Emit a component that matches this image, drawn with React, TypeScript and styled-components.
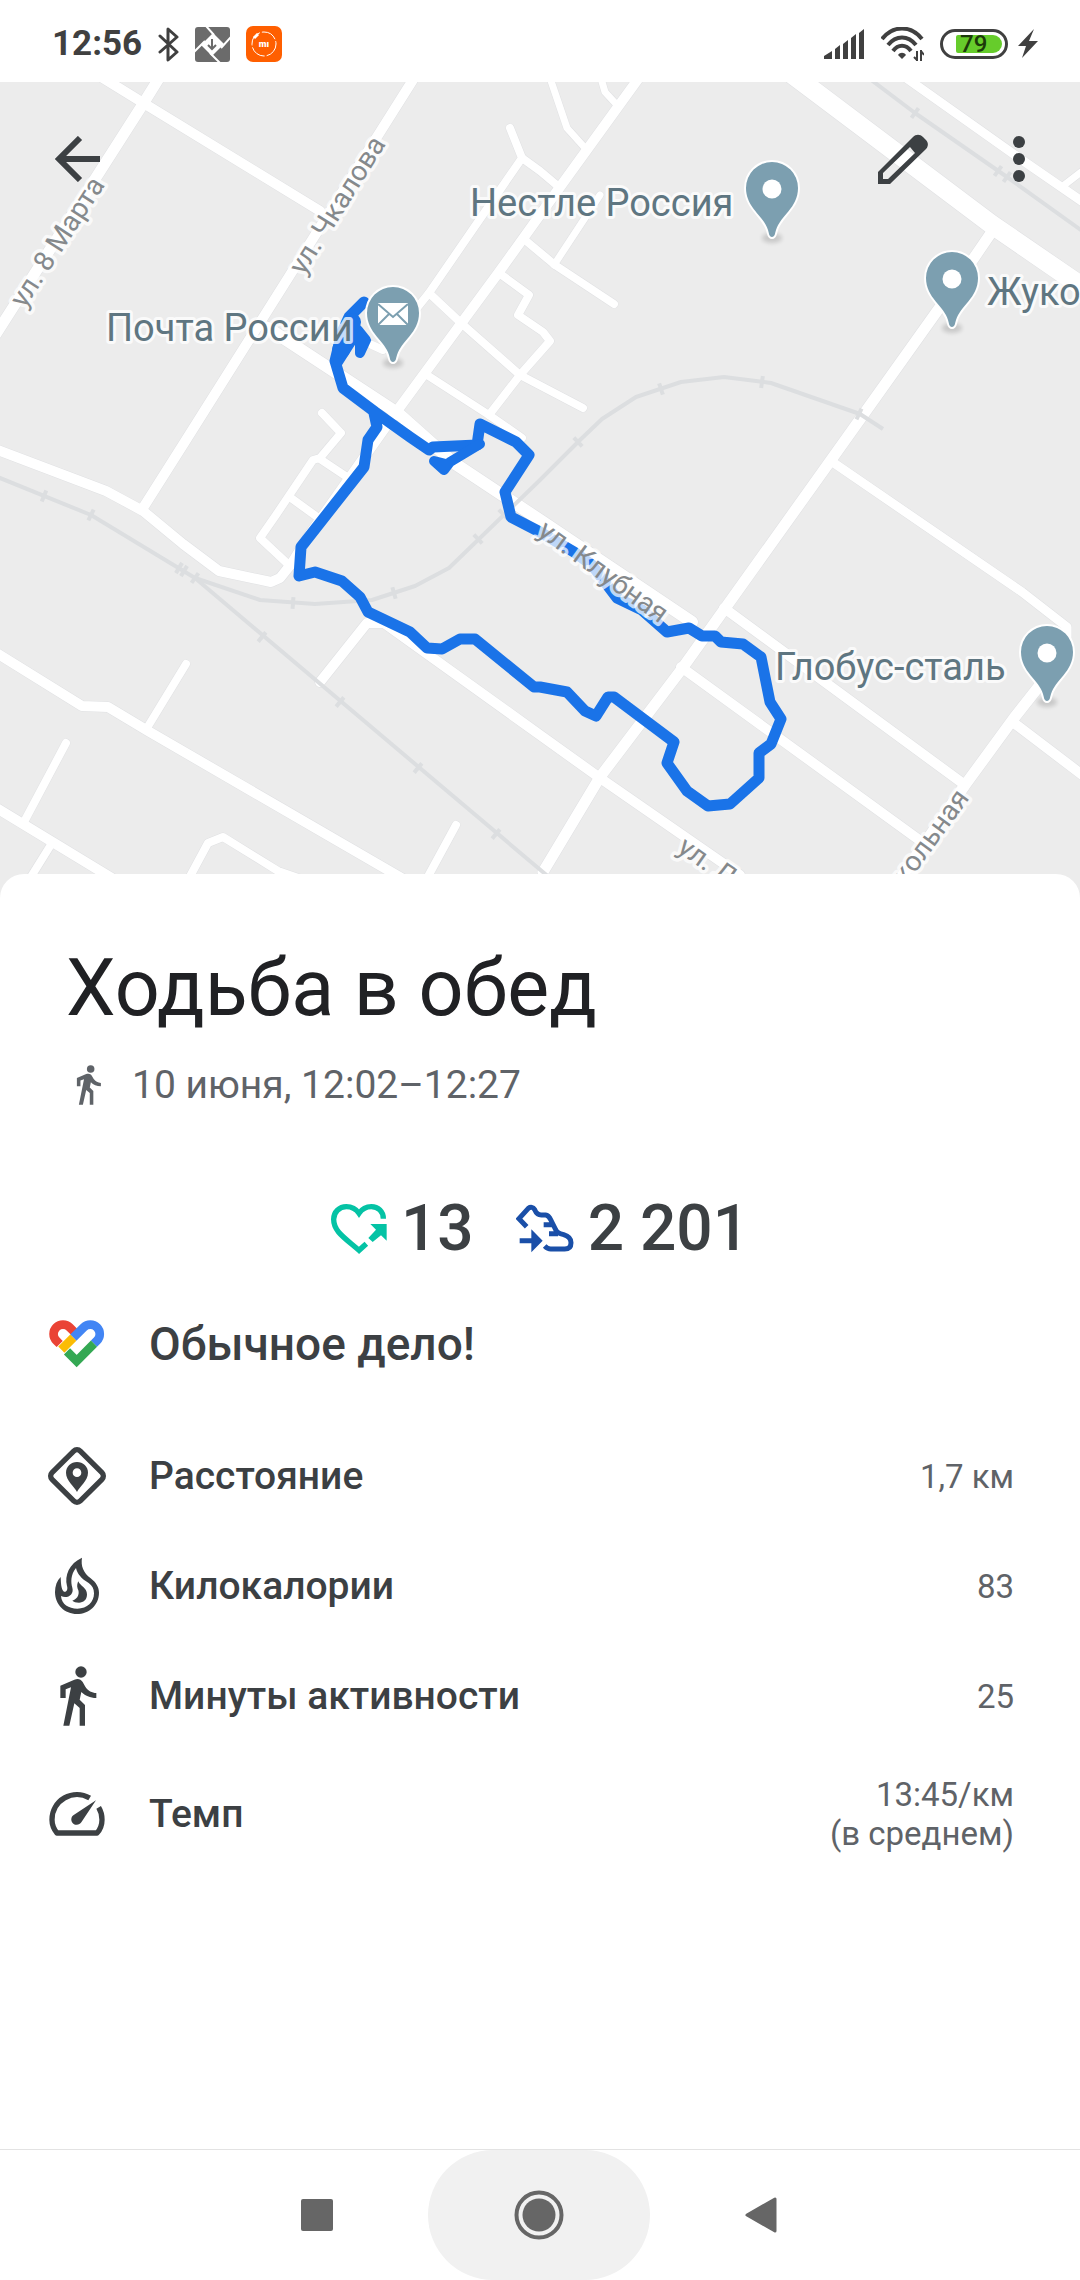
import React from "react";
import styled, { createGlobalStyle } from "styled-components";

const INK = "#3c4043";
const MUTED = "#5f6368";

const GlobalStyle = createGlobalStyle`
  * { box-sizing: border-box; }
  html, body { margin: 0; padding: 0; background: #ffffff; }
  body { font-family: Roboto, "Noto Sans", sans-serif; color: ${INK}; }
`;

const Screen = styled.div`
  display: flex;
  flex-direction: column;
  min-height: 100vh;
  background: #ffffff;
`;

const StatusBar = styled.header`
  display: flex;
  align-items: center;
  justify-content: space-between;
  padding: 20px 42px 14px 52px;
  height: 82px;
`;

const StatusGroup = styled.div<{ $gap: number }>`
  display: flex;
  align-items: center;
  gap: ${(p) => p.$gap}px;
`;

const Clock = styled.time`
  font-size: 35px;
  line-height: 48px;
  font-weight: 700;
  color: #404040;
`;

const BatteryPill = styled.div`
  display: flex;
  align-items: center;
  justify-content: flex-end;
  width: 68px;
  height: 30px;
  padding: 0 3px;
  border: 3px solid #404040;
  border-radius: 15px;
`;

const BatteryLevel = styled.div`
  display: flex;
  align-items: center;
  padding-left: 4px;
  width: 46px;
  height: 18px;
  border-radius: 2px 9px 9px 2px;
  background: #66cc2b;
  color: #1c3a0a;
  font-size: 24px;
  line-height: 18px;
  font-weight: 500;
`;

const MapArea = styled.section`
  position: relative;
  background: #ececec;
`;

const MapCanvas = styled.svg`
  display: block;
  width: 100%;
  height: auto;
`;

const Toolbar = styled.nav`
  position: absolute;
  inset: 0 0 auto 0;
  display: flex;
  align-items: center;
  padding: 29px 13px 0 29px;
`;

const Spacer = styled.div`
  flex: 1;
`;

const ToolButton = styled.button<{ $end?: boolean }>`
  display: flex;
  align-items: center;
  justify-content: center;
  width: 96px;
  height: 96px;
  margin-right: ${(p) => (p.$end ? 20 : 0)}px;
  padding: 0;
  border: 0;
  background: none;
  color: ${INK};
`;

const Sheet = styled.main`
  position: relative;
  flex: 1;
  display: flex;
  flex-direction: column;
  margin-top: -28px;
  padding-top: 66px;
  border-radius: 24px 24px 0 0;
  background: #ffffff;
`;

const Title = styled.h1`
  margin: 0;
  padding: 0 66px;
  font-size: 79px;
  line-height: 96px;
  font-weight: 400;
  color: #202124;
`;

const When = styled.p`
  display: flex;
  align-items: center;
  gap: 24px;
  margin: 0;
  padding: 25px 68px 0;
  font-size: 39px;
  line-height: 48px;
  color: ${MUTED};
`;

const Scores = styled.div`
  display: flex;
  justify-content: center;
  align-items: center;
  gap: 42px;
  padding-top: 80px;
`;

const Score = styled.div`
  display: flex;
  align-items: center;
  gap: 14px;
  font-size: 64px;
  line-height: 80px;
  font-weight: 500;
  color: ${INK};
`;

const Praise = styled.h2`
  display: flex;
  align-items: center;
  gap: 42px;
  margin: 0;
  padding: 36px 66px 0 47px;
  font-size: 46px;
  line-height: 78px;
  font-weight: 500;
`;

const Metrics = styled.dl`
  display: flex;
  flex-direction: column;
  margin: 0;
  padding: 38px 66px 0 47px;
`;

const MetricRow = styled.div<{ $tall?: boolean }>`
  display: flex;
  align-items: center;
  justify-content: space-between;
  min-height: ${(p) => (p.$tall ? 126 : 110)}px;
`;

const MetricName = styled.dt`
  display: flex;
  align-items: center;
  gap: 42px;
  font-size: 39px;
  line-height: 48px;
  font-weight: 500;
`;

const MetricValue = styled.dd`
  margin: 0;
  font-size: 33px;
  line-height: 39px;
  text-align: right;
  white-space: pre-line;
  color: ${MUTED};
`;

const NavBar = styled.footer`
  display: flex;
  justify-content: center;
  height: 131px;
  padding-right: 3px;
  border-top: 1px solid #e3e3e3;
`;

const NavButton = styled.button<{ $pressed?: boolean }>`
  display: flex;
  align-items: center;
  justify-content: center;
  width: 222px;
  padding: 0;
  border: 0;
  border-radius: 65px;
  background: ${(p) => (p.$pressed ? "#f1f1f1" : "transparent")};
  color: #666666;
`;

/* ---------- map data ---------- */

const ROADS: { w: number; d: string }[] = [
  { w: 10, d: "M98 75L145 104L320 211" },
  { w: 11, d: "M161 75L143 104L-4 334" },
  { w: 10, d: "M416 75L186 440L143 508" },
  { w: 10, d: "M-5 449L106 491L143 511L183 544L219 571L271 582L280 578L292 563L310 534L394 415L427 370L460 325L499 272L560 187L641 75" },
  { w: 12, d: "M268 328L399 414L454 463L540 520L692 622" },
  { w: 8, d: "M510 128L522 158L429 293L383 350L372 345" },
  { w: 8, d: "M522 158L540 171L559 187" },
  { w: 8, d: "M429 293L461 323L520 375L583 408" },
  { w: 8, d: "M427 375L489 415L522 438" },
  { w: 8, d: "M499 273L529 295L518 315L543 332L550 341L520 375L489 415" },
  { w: 8, d: "M525 240L555 265L614 304" },
  { w: 7, d: "M554 265L600 195" },
  { w: 7, d: "M549 75L567 128L585 148" },
  { w: 7, d: "M600 75L605 92L617 105" },
  { w: 19, d: "M793 75L991 224L1090 292" },
  { w: 9, d: "M902 75L1022 160L1090 207" },
  { w: 7, d: "M1063 186L1085 169" },
  { w: 11, d: "M991 233L950 293L831 460L726 607L681 670L600 777L543 872" },
  { w: 9, d: "M831 461L1022 592L1067 627L1067 640L1036 690" },
  { w: 11, d: "M1040 685L1014 718L965 785L898 882" },
  { w: 10, d: "M724 608L965 785" },
  { w: 10, d: "M681 667L922 842" },
  { w: 10, d: "M1014 723L1085 777" },
  { w: 10, d: "M320 682L367 623L384 623L540 735L600 778L740 875" },
  { w: 8, d: "M322 413L341 433L320 458L313 460L276 515L260 538L290 566" },
  { w: 8, d: "M320 459L350 479" },
  { w: 8, d: "M291 498L320 519" },
  { w: 10, d: "M-5 652L82 706L108 707L148 731L405 880" },
  { w: 8, d: "M186 664L147 728" },
  { w: 8, d: "M66 743L24 822" },
  { w: 10, d: "M-5 807L115 880" },
  { w: 8, d: "M52 843L29 880" },
  { w: 8, d: "M187 882L208 843L223 837L278 871L310 882" },
  { w: 8, d: "M456 825L425 882" },
];

const RAILS = [
  "M866 76L915 113L1007 177L1085 233",
  "M-5 476L91 515L195 578L550 878",
  "M195 578L260 600L315 604L372 600L415 586L449 568L540 480L580 440L602 419L636 397L681 382L724 377L771 383L860 414L883 429",
];

const SLEEPERS: [number, number, number][] = [
  [915, 113, 36], [998, 171, 36], [1007, 177, 36], [661, 389, -18], [762, 382, 8], [859, 414, 25],
  [44, 496, 22], [91, 515, 26], [179, 568, 31], [184, 571, 31], [195, 578, 35], [293, 603, 4],
  [394, 593, -16], [478, 539, -44], [503, 514, -44], [578, 442, -44], [262, 637, 40], [340, 702, 40],
  [418, 768, 40], [496, 834, 40],
];

const ROUTE =
  "M364 302L349 317L342 332L335 361L343 388L375 412L410 437L429 450L433 447L477 445L480 424L516 442L529 455L505 492L511 517L540 532L574 552L592 565L617 598L642 610L667 632L689 628L702 636L715 636L721 642L743 644L761 657L770 702L781 719L771 744L759 753L759 778L730 804L708 806L687 791L667 763L674 742L614 697L608 697L596 716L585 711L567 692L540 687L534 687L475 639L460 639L442 649L427 648L410 632L368 612L360 597L342 581L315 572L299 576L301 547L364 467L368 440L377 427L374 413";

const PINS: { x: number; y: number; mail?: boolean }[] = [
  { x: 393, y: 314, mail: true },
  { x: 772, y: 189 },
  { x: 952, y: 279 },
  { x: 1047, y: 653 },
];

const PLACES = [
  { x: 106, y: 341, name: "Почта России" },
  { x: 470, y: 216, name: "Нестле Россия" },
  { x: 987, y: 305, name: "Жуко" },
  { x: 775, y: 680, name: "Глобус-сталь" },
];

const STREETS: { x: number; y: number; turn: number; name: string; anchor: "start" | "middle" | "end" }[] = [
  { x: 65, y: 247, turn: -57, name: "ул. 8 Марта", anchor: "middle" },
  { x: 345, y: 210, turn: -58, name: "ул. Чкалова", anchor: "middle" },
  { x: 598, y: 579, turn: 36, name: "ул. Клубная", anchor: "middle" },
  { x: 676, y: 851, turn: 35, name: "ул. Ле", anchor: "start" },
  { x: 970, y: 798, turn: -54, name: "кольная", anchor: "end" },
];

const PlaceLabel = styled.text`
  font-family: Roboto, "Noto Sans", sans-serif;
  font-size: 38px;
  fill: #5f7681;
  stroke: rgba(255, 255, 255, 0.75);
  stroke-width: 6px;
  stroke-linejoin: round;
  paint-order: stroke;
`;

const StreetLabel = styled.text`
  font-family: Roboto, "Noto Sans", sans-serif;
  font-size: 28px;
  fill: #85898c;
  stroke: rgba(255, 255, 255, 0.72);
  stroke-width: 7px;
  stroke-linejoin: round;
  paint-order: stroke;
`;

function RouteMap() {
  return (
    <MapCanvas viewBox="0 82 1080 820" role="img" aria-label="Маршрут">
      <defs>
        <filter id="soft" x="-50%" y="-50%" width="200%" height="200%">
          <feGaussianBlur stdDeviation="2" />
        </filter>
      </defs>
      <rect x="0" y="82" width="1080" height="820" fill="#ececec" />
      <g fill="none" strokeLinecap="round" strokeLinejoin="round">
        {ROADS.map((r) => (
          <path key={r.d} d={r.d} stroke="#e0e1e3" strokeWidth={r.w + 1} />
        ))}
        {ROADS.map((r) => (
          <path key={r.d} d={r.d} stroke="#ffffff" strokeWidth={r.w} />
        ))}
      </g>
      <g fill="none" stroke="#dcdee0" strokeWidth="4" strokeLinejoin="round">
        {RAILS.map((d) => (
          <path key={d} d={d} />
        ))}
        {SLEEPERS.map(([x, y, a]) => (
          <path key={`${x}-${y}`} d="M0 -6V6" strokeWidth="4" transform={`translate(${x} ${y}) rotate(${a})`} />
        ))}
      </g>
      <g fill="none" stroke="#1a73e8" strokeLinejoin="round" strokeLinecap="round">
        <path d={ROUTE} strokeWidth="11" />
        <path d="M358 330L366 340L360 353V341L354 337L338 362" strokeWidth="10" />
        <path d="M352 322L341 350" strokeWidth="18" />
        <path d="M480 444L470 450L450 462L444 470L434 461L446 464" strokeWidth="10" />
      </g>
      {STREETS.map((s) => (
        <StreetLabel key={s.name} textAnchor={s.anchor} transform={`translate(${s.x} ${s.y}) rotate(${s.turn})`}>
          {s.name}
        </StreetLabel>
      ))}
      {PLACES.map((p) => (
        <PlaceLabel key={p.name} x={p.x} y={p.y}>
          {p.name}
        </PlaceLabel>
      ))}
      {PINS.map((p) => (
        <g key={p.x} transform={`translate(${p.x} ${p.y})`}>
          <ellipse cx="0" cy="49" rx="10" ry="5" fill="#000000" opacity="0.15" filter="url(#soft)" />
          <path
            d="M0 48C-3 48 -3 44 -4 41C-8 27 -26 19 -26 -1A26 26 0 0 1 26 -1C26 19 8 27 4 41C3 44 3 48 0 48Z"
            fill="#7c9fb0"
            stroke="#ffffff"
            strokeWidth="4"
            paintOrder="stroke"
          />
          {p.mail ? (
            <>
              <rect x="-15" y="-11" width="30" height="22" fill="#ffffff" />
              <path d="M-15 -10L0 3L15 -10M-15 11L-4 0M15 11L4 0" fill="none" stroke="#7c9fb0" strokeWidth="2" />
            </>
          ) : (
            <circle r="9.5" fill="#ffffff" />
          )}
        </g>
      ))}
    </MapCanvas>
  );
}

/* ---------- icons ---------- */

const BluetoothIcon = () => (
  <svg width="21" height="35" viewBox="0 0 21 35" fill="none" stroke="#404040" strokeWidth="3" strokeLinejoin="round" strokeLinecap="round">
    <path d="M2 9L19 25L10 33V2L19 10L2 25" />
  </svg>
);

const ShutterIcon = () => (
  <svg width="35" height="35" viewBox="0 0 35 35">
    <rect width="35" height="35" rx="3" fill="#6b6b6b" />
    <path d="M18 6L29 17L17 29L6 18Z" fill="#ffffff" />
    <path d="M11 -1L19 8M36 10L26 21M25 36L15 26M-1 25L10 14" stroke="#ffffff" strokeWidth="2" />
    <path d="M17 12V22M13 18L17 22L21 18" fill="none" stroke="#6b6b6b" strokeWidth="2" />
  </svg>
);

const MiIcon = () => (
  <svg width="36" height="36" viewBox="0 0 36 36">
    <rect width="36" height="36" rx="7" fill="#ff5f00" />
    <circle cx="18" cy="18" r="12" fill="none" stroke="#ffffff" strokeWidth="1" strokeDasharray="16 2" />
    <path d="M8 12L12 8" stroke="#ffffff" strokeWidth="3" />
    <text x="18" y="21" textAnchor="middle" fontFamily="Roboto, sans-serif" fontSize="9" fontWeight="900" fill="#ffffff">
      mı
    </text>
  </svg>
);

const SignalIcon = () => (
  <svg width="41" height="30" viewBox="0 0 41 30" fill="#404040">
    <path d="M0 30V27L8 22V30ZM11 30V20L16 16V30ZM19 30V15L24 11V30ZM27 30V9L32 5V30ZM35 30V4L40 0V30Z" />
  </svg>
);

const WifiIcon = () => (
  <svg width="43" height="34" viewBox="0 0 43 34" fill="none" stroke="#404040">
    <path d="M1 12C12 -2 30 -2 41 12" strokeWidth="4" />
    <path d="M7 18C15 8 27 8 35 18" strokeWidth="4" />
    <path d="M12 24C17 17 25 17 30 24" strokeWidth="4" />
    <path d="M17 28C19 25 23 25 25 28L21 32Z" fill="#404040" stroke="none" />
    <path d="M36 34V24M33 30L36 33M40 23V34M40 24L43 28" strokeWidth="2" />
  </svg>
);

const BoltIcon = () => (
  <svg width="20" height="30" viewBox="0 0 20 30" fill="#404040">
    <path d="M16 0L0 17H8L4 29L20 12H11Z" />
  </svg>
);

const BackIcon = () => (
  <svg width="46" height="46" viewBox="0 0 46 46" fill="none" stroke="currentColor" strokeWidth="6">
    <path d="M46 23H7M26 2L5 23L26 44" />
  </svg>
);

const PencilIcon = () => (
  <svg width="52" height="52" viewBox="0 0 52 52" fill="currentColor">
    <path fillRule="evenodd" d="M1 51V39L36 4C39 1 43 1 46 4L49 7C52 10 51 14 49 16L13 51ZM6 46H11L38 20L33 14L6 40Z" />
  </svg>
);

const MoreIcon = () => (
  <svg width="12" height="46" viewBox="0 0 12 46" fill="currentColor">
    <circle cx="6" cy="6" r="6" />
    <circle cx="6" cy="23" r="6" />
    <circle cx="6" cy="40" r="6" />
  </svg>
);

const WALK_PATH =
  "M91 438L133 420C145 416 152 419 158 427L166 441C174 454 186 459 199 460V475C180 475 165 468 154 457L149 480L165 496V558H149V505L133 491L118 558H100L123 443L107 449V475H91Z";

const WalkIcon = ({ size }: { size: number }) => (
  <svg width={size} height={size} viewBox="51 379 180 180" fill="currentColor">
    <circle cx="153" cy="397" r="17" />
    <path d={WALK_PATH} />
  </svg>
);

const HeartPointsIcon = () => (
  <svg width="56" height="50" viewBox="61 93 168 150">
    <path
      d="M218 137C218 115 202 101 182 101C165 101 154 108 145 121C136 108 125 101 107 101C86 101 69 117 69 139C69 175 100 193 145 232L167 212"
      fill="none"
      stroke="#04c3a5"
      strokeWidth="16"
    />
    <path d="M179 153H228V203L211 187L186 207L173 195L196 170Z" fill="#04c3a5" />
  </svg>
);

const ShoeIcon = () => (
  <svg width="58" height="50" viewBox="604 95 174 150">
    <path
      d="M636 163L613 139L641 108C648 103 655 104 660 112C664 122 668 128 680 128H693C703 129 706 138 710 146L722 170C727 182 735 184 747 187C760 191 769 200 769 211C769 224 762 230 750 230H708C700 230 695 226 690 221M687 157H714M703 184H730"
      fill="none"
      stroke="#1a4fa8"
      strokeWidth="15"
    />
    <path d="M615 198H650V171L684 205L650 240V213H615Z" fill="#1a4fa8" />
  </svg>
);

const FitHeartIcon = () => (
  <svg width="60" height="60" viewBox="51 76 180 180" fill="none" strokeWidth="26">
    <path d="M136 133L119 116A28 28 0 1 0 79 156L89 166" stroke="#ea4335" />
    <path d="M130 147L161 116A28 28 0 1 1 201 156L192 165" stroke="#4285f4" />
    <path d="M192 165L140 217L111 188" stroke="#34a853" />
    <path d="M130 147L94 183" stroke="#fbbc04" />
  </svg>
);

const DistanceIcon = () => (
  <svg width="60" height="60" viewBox="51 468 180 180">
    <rect x="81" y="498" width="120" height="120" rx="14" transform="rotate(45 141 558)" fill="none" stroke="currentColor" strokeWidth="16" />
    <path
      fillRule="evenodd"
      fill="currentColor"
      d="M141 606C134 590 108 572 108 548A33 32 0 0 1 174 548C174 572 148 590 141 606ZM141 535A13 13 0 1 0 141 561A13 13 0 1 0 141 535Z"
    />
  </svg>
);

const FlameIcon = () => (
  <svg width="60" height="60" viewBox="51 50 180 180" fill="currentColor">
    <path
      fillRule="evenodd"
      d="M156 55C152 80 160 100 182 117C199 130 207 145 207 160C207 198 176 224 141 224C104 224 75 196 75 158C75 140 81 124 92 113C93 125 92 150 102 157C110 159 114 150 111 140C103 108 118 72 156 55ZM138 86C122 106 122 128 127 145C133 165 112 180 93 170C95 195 116 208 142 208C172 208 192 188 192 162C192 148 186 138 176 131C154 118 142 104 138 86Z"
    />
    <path d="M145 126C150 140 171 145 171 165C171 182 160 190 147 190C138 190 131 187 127 184C145 178 150 160 143 148C140 140 142 132 145 126Z" />
  </svg>
);

const PaceIcon = () => (
  <svg width="60" height="60" viewBox="51 732 180 180">
    <path
      d="M179 774A75 75 0 0 0 66 839C66 855 72 868 81 879H201C211 868 216 854 216 839C216 824 212 812 206 802"
      fill="none"
      stroke="currentColor"
      strokeWidth="16"
      strokeLinejoin="round"
    />
    <path d="M198 781L130 826C122 832 122 845 130 851C138 857 149 855 154 847Z" fill="currentColor" />
  </svg>
);

const METRICS = [
  { icon: <DistanceIcon />, name: "Расстояние", value: "1,7 км" },
  { icon: <FlameIcon />, name: "Килокалории", value: "83" },
  { icon: <WalkIcon size={60} />, name: "Минуты активности", value: "25" },
  { icon: <PaceIcon />, name: "Темп", value: "13:45/км\n(в среднем)", tall: true },
];

export default function App() {
  return (
    <>
      <GlobalStyle />
      <Screen>
        <StatusBar>
          <StatusGroup $gap={16}>
            <Clock>12:56</Clock>
            <BluetoothIcon />
            <ShutterIcon />
            <MiIcon />
          </StatusGroup>
          <StatusGroup $gap={16}>
            <SignalIcon />
            <WifiIcon />
            <StatusGroup $gap={10}>
              <BatteryPill>
                <BatteryLevel>79</BatteryLevel>
              </BatteryPill>
              <BoltIcon />
            </StatusGroup>
          </StatusGroup>
        </StatusBar>

        <MapArea>
          <RouteMap />
          <Toolbar>
            <ToolButton aria-label="Назад">
              <BackIcon />
            </ToolButton>
            <Spacer />
            <ToolButton $end aria-label="Изменить">
              <PencilIcon />
            </ToolButton>
            <ToolButton aria-label="Ещё">
              <MoreIcon />
            </ToolButton>
          </Toolbar>
        </MapArea>

        <Sheet>
          <Title>Ходьба в обед</Title>
          <When>
            <WalkIcon size={40} />
            10 июня, 12:02–12:27
          </When>
          <Scores>
            <Score>
              <HeartPointsIcon />
              13
            </Score>
            <Score>
              <ShoeIcon />2 201
            </Score>
          </Scores>
          <Praise>
            <FitHeartIcon />
            Обычное дело!
          </Praise>
          <Metrics>
            {METRICS.map((m) => (
              <MetricRow key={m.name} $tall={m.tall}>
                <MetricName>
                  {m.icon}
                  {m.name}
                </MetricName>
                <MetricValue>{m.value}</MetricValue>
              </MetricRow>
            ))}
          </Metrics>
        </Sheet>

        <NavBar>
          <NavButton aria-label="Недавние">
            <svg width="32" height="32" viewBox="0 0 32 32">
              <rect width="32" height="32" rx="2" fill="currentColor" />
            </svg>
          </NavButton>
          <NavButton $pressed aria-label="Домой">
            <svg width="50" height="50" viewBox="0 0 50 50">
              <circle cx="25" cy="25" r="22.5" fill="none" stroke="currentColor" strokeWidth="4" />
              <circle cx="25" cy="25" r="16.5" fill="currentColor" />
            </svg>
          </NavButton>
          <NavButton aria-label="Назад">
            <svg width="32" height="36" viewBox="0 0 32 36">
              <path d="M2 18L30 2V34Z" fill="currentColor" stroke="currentColor" strokeWidth="3" strokeLinejoin="round" />
            </svg>
          </NavButton>
        </NavBar>
      </Screen>
    </>
  );
}
